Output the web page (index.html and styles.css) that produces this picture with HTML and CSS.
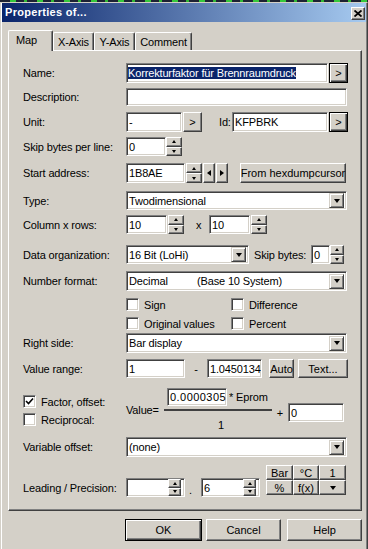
FILE: index.html
```html
<!DOCTYPE html>
<html lang="en">

<head>
  <meta charset="UTF-8">
  <meta name="viewport" content="width=device-width, initial-scale=1.0">
  <title>Properties of...</title>
  <link rel="stylesheet" href="styles.css">
</head>

<body>
  <div class="backdrop"></div>
  <div class="window">
    <div class="titlebar">
      <span class="title">Properties of...</span>
      <button class="btn close-btn">
        <svg width="8" height="7" viewBox="0 0 8 7">
          <path d="M0.5 0.5 L7.5 6.5 M7.5 0.5 L0.5 6.5" stroke="#000" stroke-width="1.8" />
        </svg>
      </button>
    </div>

    <div class="dialog-body">
      <div class="tabs">
        <div class="tab active tab-map">Map</div>
        <div class="tab tab-x">X-Axis</div>
        <div class="tab tab-y">Y-Axis</div>
        <div class="tab tab-comment">Comment</div>
      </div>

      <div class="panel">
        <div class="row row-name">
          <span class="lbl">Name:</span>
          <div class="edit name-edit"><span class="sel">Korrekturfaktor für Brennraumdruck</span></div>
          <button class="btn default more-btn">&gt;</button>
        </div>

        <div class="row row-desc">
          <span class="lbl">Description:</span>
          <div class="edit full-edit"></div>
        </div>

        <div class="row row-unit">
          <span class="lbl">Unit:</span>
          <div class="edit unit-edit">-</div>
          <button class="btn more-btn">&gt;</button>
          <span class="id-lbl">Id:</span>
          <div class="edit id-edit">KFPBRK</div>
          <button class="btn default more-btn">&gt;</button>
        </div>

        <div class="row row-skip">
          <span class="lbl">Skip bytes per line:</span>
          <div class="edit skip-edit">0</div>
          <div class="spin"><span class="spin-btn up"></span><span class="spin-btn down"></span></div>
        </div>

        <div class="row row-start">
          <span class="lbl">Start address:</span>
          <div class="edit addr-edit">1B8AE</div>
          <div class="spin addr-spin"><span class="spin-btn up"></span><span class="spin-btn down"></span></div>
          <button class="btn arrow-btn"><span class="tri-left"></span></button>
          <button class="btn arrow-btn"><span class="tri-right"></span></button>
          <button class="btn hex-btn">From hexdumpcursor</button>
        </div>

        <div class="row row-type">
          <span class="lbl">Type:</span>
          <div class="edit select full-edit">Twodimensional<span class="drop"></span></div>
        </div>

        <div class="row row-cols">
          <span class="lbl">Column x rows:</span>
          <div class="edit col-edit">10</div>
          <div class="spin"><span class="spin-btn up"></span><span class="spin-btn down"></span></div>
          <span class="times">x</span>
          <div class="edit col-edit">10</div>
          <div class="spin"><span class="spin-btn up"></span><span class="spin-btn down"></span></div>
        </div>

        <div class="row row-data">
          <span class="lbl">Data organization:</span>
          <div class="edit select data-select">16 Bit (LoHi)<span class="drop"></span></div>
          <span class="skip-lbl">Skip bytes:</span>
          <div class="edit small-edit">0</div>
          <div class="spin small-spin"><span class="spin-btn up"></span><span class="spin-btn down"></span></div>
        </div>

        <div class="row row-num">
          <span class="lbl">Number format:</span>
          <div class="edit select full-edit"><span class="num-name">Decimal</span>(Base 10 System)<span class="drop"></span></div>
        </div>

        <div class="check-grid">
          <div class="check"><span class="box"></span>Sign</div>
          <div class="check"><span class="box"></span>Difference</div>
          <div class="check"><span class="box"></span>Original values</div>
          <div class="check"><span class="box"></span>Percent</div>
        </div>

        <div class="row row-right">
          <span class="lbl">Right side:</span>
          <div class="edit select full-edit">Bar display<span class="drop"></span></div>
        </div>

        <div class="row row-range">
          <span class="lbl">Value range:</span>
          <div class="edit range-edit">1</div>
          <span class="dash">-</span>
          <div class="edit range-edit2">1.0450134</div>
          <button class="btn auto-btn">Auto</button>
          <button class="btn text-btn">Text...</button>
        </div>

        <div class="row-factor">
          <div class="factor-checks">
            <div class="check">
              <span class="box">
                <svg width="9" height="9" viewBox="0 0 9 9">
                  <path d="M1 4 L3.5 6.5 L8 1.5" fill="none" stroke="#000" stroke-width="1.6" />
                </svg>
              </span>Factor, offset:
            </div>
            <div class="check"><span class="box"></span>Reciprocal:</div>
          </div>
          <div class="formula">
            <span class="formula-lbl">Value=</span>
            <div class="fraction">
              <div class="numerator">
                <div class="edit factor-edit">0.00003051</div>
                <span class="eprom">* Eprom</span>
              </div>
              <div class="fraction-line"></div>
              <div class="denominator">1</div>
            </div>
            <span class="plus">+</span>
            <div class="edit offset-edit">0</div>
          </div>
        </div>

        <div class="row row-var">
          <span class="lbl">Variable offset:</span>
          <div class="edit select full-edit">(none)<span class="drop"></span></div>
        </div>

        <div class="row-lead">
          <div class="lead-fields">
            <span class="lbl">Leading / Precision:</span>
            <div class="edit lead-edit">
              <span class="lead-value"></span>
              <div class="spin inner-spin"><span class="spin-btn up"></span><span class="spin-btn down"></span></div>
            </div>
            <span class="dot">.</span>
            <div class="edit lead-edit">
              <span class="lead-value">6</span>
              <div class="spin inner-spin"><span class="spin-btn up"></span><span class="spin-btn down"></span></div>
            </div>
          </div>
          <div class="unit-grid">
            <button class="btn unit-btn">Bar</button>
            <button class="btn unit-btn">°C</button>
            <button class="btn unit-btn">1</button>
            <button class="btn unit-btn">%</button>
            <button class="btn unit-btn">f(x)</button>
            <button class="btn unit-btn"><span class="tri-down"></span></button>
          </div>
        </div>
      </div>

      <div class="footer">
        <button class="btn default ok-btn">OK</button>
        <button class="btn cancel-btn">Cancel</button>
        <button class="btn help-btn">Help</button>
      </div>
    </div>
  </div>
</body>

</html>
```

FILE: styles.css
```css
* {
  box-sizing: border-box;
}

body {
  margin: 0;
  width: 368px;
  height: 549px;
  overflow: hidden;
  background-color: #d4d0c8;
  font-family: "Liberation Sans", Arial, sans-serif;
  font-size: 11px;
  letter-spacing: -0.15px;
  color: #000;
}

/* whatever sits behind the dialog */
.backdrop {
  height: 2px;
  background: repeating-linear-gradient(90deg, #1d2233 0 10px, #35c83a 10px 16px, #1d2233 16px 24px, #2fb834 24px 27px);
}

.window {
  height: 547px;
  border: 1px solid;
  border-color: #d4d0c8 #404040 #404040 #d4d0c8;
  border-bottom: 0;
  padding: 0 1px;
  box-shadow: inset 1px 0 #fff, inset -1px 0 #808080;
}

.titlebar {
  height: 19px;
  display: flex;
  justify-content: space-between;
  padding: 0 1px 0 3px;
  background: linear-gradient(90deg, #0a246a, #a6caf0);
}

.title {
  padding-top: 3px;
  color: #fff;
  font-weight: bold;
  letter-spacing: 0.3px;
}

/* raised 3d button */
.btn {
  display: flex;
  align-items: center;
  justify-content: center;
  padding: 0;
  margin: 0;
  white-space: nowrap;
  background-color: #d4d0c8;
  border: 1px solid;
  border-color: #fff #404040 #404040 #fff;
  box-shadow: inset -1px -1px #808080;
  font: inherit;
  color: #000;
  flex: none;
}

.btn.default {
  border-color: #000;
  box-shadow: inset 1px 1px #fff, inset -1px -1px #404040, inset -2px -2px #808080;
}

.close-btn {
  align-self: flex-end;
  width: 14px;
  height: 13px;
  margin-bottom: 2px;
}

.dialog-body {
  padding: 0 4px 0 6px;
}

.tabs {
  display: flex;
  align-items: flex-end;
  height: 21px;
  margin-top: 8px;
  position: relative;
  z-index: 1;
}

.tab {
  height: 18px;
  margin-bottom: 1px;
  padding-top: 3px;
  text-align: center;
  border: 1px solid;
  border-bottom: 0;
  border-color: #fff #404040 #404040 #fff;
  border-radius: 2px 2px 0 0;
  box-shadow: inset -1px 0 #808080;
  background-color: #d4d0c8;
}

.tab.active {
  height: 21px;
  margin-bottom: 0;
  padding-top: 3px;
  padding-left: 7px;
  text-align: left;
}

.tab-map {
  width: 45px;
}

.tab-x,
.tab-y {
  width: 41px;
}

.tab-comment {
  width: 57px;
}

.panel {
  margin-top: -1px;
  padding: 12px 0 13px 14px;
  border: 1px solid;
  border-color: #fff #404040 #404040 #fff;
  box-shadow: inset -1px -1px #808080;
}

.row {
  display: flex;
  align-items: center;
  height: 19px;
}

.lbl {
  width: 103px;
  flex: none;
  white-space: nowrap;
}

/* sunken white field */
.edit {
  height: 100%;
  display: flex;
  align-items: center;
  flex: none;
  padding: 0 2px;
  overflow: hidden;
  white-space: nowrap;
  background-color: #fff;
  border: 1px solid;
  border-color: #808080 #fff #fff #808080;
  box-shadow: inset 1px 1px #404040, inset -1px -1px #d4d0c8;
}

.sel {
  background-color: #0a246a;
  color: #fff;
  margin-left: -1px;
}

.select {
  padding-right: 2px;
}

.drop {
  width: 15px;
  height: 15px;
  margin-left: auto;
  flex: none;
  display: flex;
  align-items: center;
  justify-content: center;
  background-color: #d4d0c8;
  border: 1px solid;
  border-color: #d4d0c8 #404040 #404040 #d4d0c8;
  box-shadow: inset 1px 1px #fff, inset -1px -1px #808080;
}

.drop::after,
.tri-down {
  content: "";
  border-left: 3.5px solid transparent;
  border-right: 3.5px solid transparent;
  border-top: 4px solid #000;
}

.spin {
  width: 16px;
  height: 100%;
  display: flex;
  flex-direction: column;
  flex: none;
}

.spin-btn {
  flex: 1;
  display: flex;
  align-items: center;
  justify-content: center;
  background-color: #d4d0c8;
  border: 1px solid;
  border-color: #fff #404040 #404040 #fff;
  box-shadow: inset -1px -1px #808080;
}

.spin-btn.up::after {
  content: "";
  border-left: 2.5px solid transparent;
  border-right: 2.5px solid transparent;
  border-bottom: 3px solid #000;
}

.spin-btn.down::after {
  content: "";
  border-left: 2.5px solid transparent;
  border-right: 2.5px solid transparent;
  border-top: 3px solid #000;
}

.tri-left {
  border-top: 3.5px solid transparent;
  border-bottom: 3.5px solid transparent;
  border-right: 4px solid #000;
}

.tri-right {
  border-top: 3.5px solid transparent;
  border-bottom: 3.5px solid transparent;
  border-left: 4px solid #000;
}

/* row by row */
.row-name {
  height: 20px;
}

.name-edit {
  width: 202px;
  margin-right: 1px;
}

.more-btn {
  width: 19px;
  height: 20px;
}

.row-desc {
  height: 18px;
  margin-top: 5px;
}

.full-edit {
  width: 221px;
}

.row-unit {
  height: 20px;
  margin-top: 6px;
}

.unit-edit {
  width: 56px;
  margin-right: 1px;
}

.id-lbl {
  width: 13px;
  margin-left: 17px;
  flex: none;
  white-space: nowrap;
}

.id-edit {
  width: 96px;
  margin-right: 1px;
}

.row-skip {
  margin-top: 5px;
}

.skip-edit {
  width: 40px;
}

.row-start {
  height: 20px;
  margin-top: 7px;
}

.addr-edit {
  width: 59px;
  margin-right: 1px;
}

.addr-spin {
  margin-right: 1px;
}

.arrow-btn {
  width: 12px;
  height: 20px;
  margin-right: 1px;
}

.hex-btn {
  width: 106px;
  height: 20px;
  margin-left: 11px;
}

.row-type {
  margin-top: 8px;
}

.row-cols {
  margin-top: 5px;
}

.col-edit {
  width: 41px;
  margin-right: 1px;
}

.times {
  margin-left: 12px;
  width: 13px;
}

.row-data {
  margin-top: 11px;
}

.data-select {
  width: 123px;
}

.skip-lbl {
  width: 57px;
  margin-left: 5px;
}

.small-edit {
  width: 19px;
}

.small-spin {
  width: 14px;
}

.row-num {
  height: 20px;
  margin-top: 7px;
}

.num-name {
  width: 68px;
  flex: none;
}

.check-grid {
  display: grid;
  grid-template-columns: 105px auto;
  grid-template-rows: 13px 13px;
  row-gap: 6px;
  margin: 7px 0 0 103px;
}

.check {
  display: flex;
  align-items: center;
  height: 13px;
  white-space: nowrap;
}

.box {
  width: 13px;
  height: 13px;
  margin-right: 5px;
  flex: none;
  display: flex;
  align-items: center;
  justify-content: center;
  background-color: #fff;
  border: 1px solid;
  border-color: #808080 #fff #fff #808080;
  box-shadow: inset 1px 1px #404040, inset -1px -1px #d4d0c8;
}

.row-right {
  height: 20px;
  margin-top: 3px;
}

.row-range {
  margin-top: 6px;
}

.range-edit {
  width: 59px;
}

.dash {
  width: 22px;
  text-align: center;
}

.range-edit2 {
  width: 55px;
}

.auto-btn {
  width: 25px;
  height: 19px;
  margin-left: 7px;
}

.text-btn {
  width: 50px;
  height: 19px;
  margin-left: 4px;
}

/* factor / offset block */
.row-factor {
  display: flex;
  margin-top: 10px;
}

.factor-checks {
  width: 103px;
  padding-top: 7px;
  display: flex;
  flex-direction: column;
  gap: 5px;
  flex: none;
}

.formula {
  display: flex;
  align-items: flex-start;
}

.formula-lbl {
  width: 38px;
  margin-top: 16px;
  line-height: 13px;
}

.fraction {
  width: 108px;
  display: flex;
  flex-direction: column;
}

.numerator {
  display: flex;
  align-items: center;
  height: 18px;
  padding-left: 3px;
}

.factor-edit {
  width: 60px;
  margin-right: 2px;
  letter-spacing: 0.45px;
}

.fraction-line {
  height: 2px;
  margin-top: 3px;
  background-color: #404040;
}

.denominator {
  margin-top: 8px;
  line-height: 13px;
  text-align: center;
  padding-left: 6px;
}

.plus {
  width: 16px;
  margin-top: 19px;
  line-height: 13px;
  text-align: center;
}

.offset-edit {
  width: 56px;
  height: 19px;
  margin-top: 15px;
}

.row-var {
  height: 20px;
  margin-top: 5px;
}

/* leading / precision */
.row-lead {
  display: flex;
  align-items: flex-start;
  margin-top: 8px;
}

.lead-fields {
  display: flex;
  align-items: center;
  height: 19px;
  margin-top: 13px;
}

.lead-edit {
  width: 59px;
  padding-right: 3px;
}

.lead-value {
  flex: 1;
}

.inner-spin {
  width: 13px;
}

.dot {
  width: 16px;
  align-self: flex-end;
  padding-left: 4px;
  line-height: 13px;
}

.unit-grid {
  display: grid;
  grid-template-columns: 27px 26px 27px;
  grid-template-rows: 15px 15px;
  margin-left: 6px;
}

.unit-btn {
  height: 15px;
}

.footer {
  display: flex;
  justify-content: flex-end;
  margin-top: 8px;
}

.ok-btn {
  width: 77px;
  height: 22px;
}

.cancel-btn {
  width: 75px;
  height: 22px;
  margin-left: 4px;
}

.help-btn {
  width: 75px;
  height: 22px;
  margin-left: 6px;
}
```
